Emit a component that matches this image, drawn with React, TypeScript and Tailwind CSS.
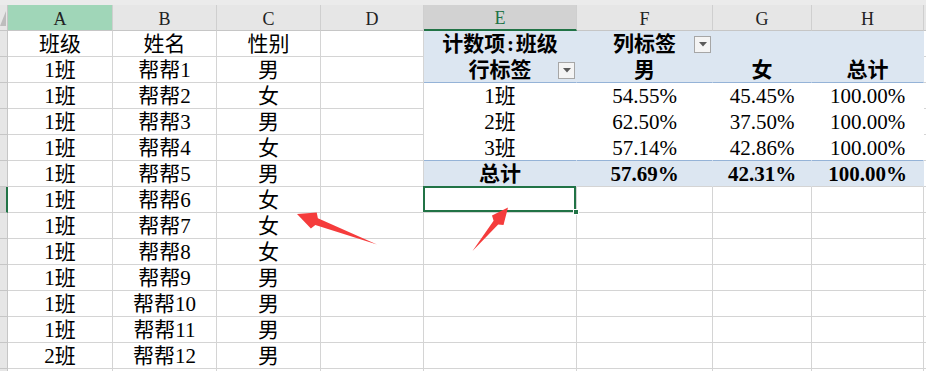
import React from "react";
import clsx from "clsx";

const COLS = ["A", "B", "C", "D", "E", "F", "G", "H"];

const students: [string, string, string][] = [
  ["班级", "姓名", "性别"],
  ["1班", "帮帮1", "男"],
  ["1班", "帮帮2", "女"],
  ["1班", "帮帮3", "男"],
  ["1班", "帮帮4", "女"],
  ["1班", "帮帮5", "男"],
  ["1班", "帮帮6", "女"],
  ["1班", "帮帮7", "女"],
  ["1班", "帮帮8", "女"],
  ["1班", "帮帮9", "男"],
  ["1班", "帮帮10", "男"],
  ["1班", "帮帮11", "男"],
  ["2班", "帮帮12", "男"],
  ["", "", ""],
];

// pivot block E1:H6
const pivot: string[][] = [
  ["计数项:班级", "列标签", "", ""],
  ["行标签", "男", "女", "总计"],
  ["1班", "54.55%", "45.45%", "100.00%"],
  ["2班", "62.50%", "37.50%", "100.00%"],
  ["3班", "57.14%", "42.86%", "100.00%"],
  ["总计", "57.69%", "42.31%", "100.00%"],
];

const pivotRowStyle = [
  "bg-[#dce6f1] border-r-[#dce6f1] border-b-[#dce6f1] font-bold",
  "bg-[#dce6f1] border-r-[#dce6f1] border-b-[#95b3d7] font-bold",
  "bg-white border-r-white border-b-white",
  "bg-white border-r-white border-b-white",
  "bg-white border-r-white border-b-[#95b3d7]",
  "bg-[#dce6f1] border-r-[#dce6f1] border-b-[#d4d4d4] font-bold",
];

const SELECTED_ROW = 6;

function FilterButton() {
  return (
    <span className="flex h-[17px] w-[17px] items-center justify-center border border-[#a6a6a6] bg-[#f4f4f4]">
      <svg width="8" height="5" viewBox="0 0 8 5">
        <polygon points="0,0 8,0 4,4.5" fill="#5a5a5a" />
      </svg>
    </span>
  );
}

// half-width colon takes a full half-em slot, like the sheet font does
function Label({ text }: { text: string }) {
  const parts = text.split(":");
  if (parts.length < 2) return <>{text}</>;
  return (
    <>
      {parts[0]}
      <span className="inline-block w-[0.5em] text-center">:</span>
      {parts[1]}
    </>
  );
}

function PivotCell({ row, col, text }: { row: number; col: number; text: string }) {
  const withFilter = (row === 0 && col === 1) || (row === 1 && col === 0);
  return (
    <div
      className={clsx(
        "h-[26px] border-b border-r pt-[2px]",
        pivotRowStyle[row],
        col === 3 && "border-r-[#d4d4d4]",
        withFilter ? "grid grid-cols-[1fr_auto_1fr] items-center" : "flex items-center justify-center"
      )}
    >
      {withFilter ? (
        <>
          <span />
          <span>{text}</span>
          <span className="flex justify-end pr-px">
            <FilterButton />
          </span>
        </>
      ) : (
        <Label text={text} />
      )}
    </div>
  );
}

export default function App() {
  return (
    <div className="relative h-[371px] w-[926px] overflow-hidden bg-white font-['Liberation_Serif','Noto_Sans_CJK_SC',serif] text-[21px] leading-none text-black">
      <div className="h-[5px] bg-[#ebebeb]" />
      <div className="grid grid-cols-[8px_105px_104px_104px_103px_153px_136px_99px_112px_1fr]">
        {/* column headers */}
        <div className="relative h-[26px] border-b border-r border-[#c6c6c6] bg-[#e6e6e6]">
          <svg className="absolute inset-0" width="7" height="25" viewBox="0 0 7 25">
            <polygon points="0,21 6,21 6,6" fill="#bdbdbd" />
          </svg>
        </div>
        {COLS.map((c) => (
          <div
            key={c}
            className={clsx(
              "flex h-[26px] items-center justify-center border-r border-[#cfcfcf] pt-[2px] text-[18px]",
              c === "A" && "border-b border-b-[#c6c6c6] bg-[#a0d6b8] text-[#222]",
              c === "E" && "border-b-2 border-b-[#217346] bg-[#d2d2d2] text-[#217346]",
              c !== "A" && c !== "E" && "border-b border-b-[#c6c6c6] bg-[#e6e6e6] text-[#222]"
            )}
          >
            {c}
          </div>
        ))}
        <div className="h-[26px] border-b border-[#c6c6c6] bg-[#e6e6e6]" />

        {/* sheet rows */}
        {students.map((s, r) => (
          <React.Fragment key={r}>
            <div
              className={clsx(
                "h-[26px] border-b border-[#c6c6c6]",
                r === SELECTED_ROW ? "border-r-2 border-r-[#217346] bg-[#d2d2d2]" : "border-r bg-[#e6e6e6]"
              )}
            />
            {s.map((v, i) => (
              <div
                key={i}
                className="flex h-[26px] items-center justify-center border-b border-r border-[#d4d4d4] pt-[2px]"
              >
                {v}
              </div>
            ))}
            <div className="h-[26px] border-b border-r border-[#d4d4d4]" />
            {r < pivot.length
              ? pivot[r].map((v, i) => <PivotCell key={i} row={r} col={i} text={v} />)
              : [0, 1, 2, 3].map((i) =>
                  r === SELECTED_ROW && i === 0 ? (
                    <div key={i} className="relative h-[26px] border-b border-r border-[#d4d4d4]">
                      <div className="absolute -left-px -top-px bottom-0 right-0 border-2 border-[#217346]" />
                      <div className="absolute -bottom-[3px] -right-[3px] h-[6px] w-[6px] border border-white bg-[#217346]" />
                    </div>
                  ) : (
                    <div key={i} className="h-[26px] border-b border-r border-[#d4d4d4]" />
                  )
                )}
            <div className="h-[26px] border-b border-[#d4d4d4]" />
          </React.Fragment>
        ))}
      </div>

      {/* red callout arrows */}
      <svg
        className="pointer-events-none absolute left-0 top-0"
        width="926"
        height="371"
        viewBox="0 0 926 371"
      >
        <polygon
          points="297,214 316.7,212.5 317.9,218.3 377,244.5 315.3,224.9 310.9,228.5"
          fill="#f53c3c"
        />
        <polygon
          points="508,207.5 503.5,225 498.2,224.5 472.5,251 493.6,220.7 492,215.5"
          fill="#f53c3c"
        />
      </svg>
    </div>
  );
}
